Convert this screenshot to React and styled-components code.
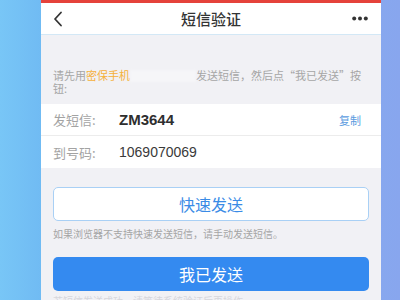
import React from "react";
import styled, { createGlobalStyle } from "styled-components";

const Global = createGlobalStyle`
  html, body { margin: 0; padding: 0; }
  body {
    width: 400px; height: 300px; overflow: hidden;
    font-family: "Noto Sans CJK SC", "Noto Sans", sans-serif;
  }
`;

const Page = styled.div`
  width: 400px;
  height: 300px;
  background: linear-gradient(90deg, #78c6f6 0%, #6fb9f3 12%, #7fb0f1 60%, #88a6ee 100%);
  display: flex;
  align-items: flex-start;
  padding-left: 41px;
  box-sizing: border-box;
  overflow: hidden;
`;

const Card = styled.div`
  width: 340px;
  min-height: 300px;
  background: #f1f1f5;
  display: block;
`;

const RedBar = styled.div`
  height: 3px;
  background: #e5423b;
`;

const NavBar = styled.div`
  height: 31px;
  background: #fff;
  border-bottom: 1px solid #d3e8f6;
  display: grid;
  grid-template-columns: 40px 1fr 40px;
  align-items: center;
`;

const Title = styled.div`
  text-align: center;
  font-size: 15px;
  color: #333;
  font-weight: 500;
`;

const IconSlot = styled.div`
  display: flex;
  align-items: center;
  justify-content: ${(p) => p.$justify};
  padding: ${(p) => p.$pad};
`;

const Intro = styled.div`
  padding: 34px 18px 9px 12px;
  font-size: 11px;
  line-height: 13px;
  color: #a6a6a6;
`;

const IntroLine = styled.div`
  display: flex;
  align-items: center;
  height: 13px;
  white-space: nowrap;
`;

const Orange = styled.span`
  color: #f5b03a;
`;

const Redacted = styled.span`
  display: inline-block;
  width: 66px;
  height: 12px;
  background: #f6f6f8;
  filter: blur(1px);
`;

const Rows = styled.div`
  background: #fff;
`;

const Row = styled.div`
  height: ${(p) => (p.$last ? "32px" : "31px")};
  display: flex;
  align-items: center;
  padding: 0 20px 0 12px;
  border-bottom: ${(p) => (p.$last ? "none" : "1px solid #ececec")};
`;

const Label = styled.span`
  width: 66px;
  font-size: 13px;
  color: #a3a3a3;
`;

const Value = styled.span`
  flex: 1;
  font-family: "Liberation Sans", Arial, sans-serif;
  font-size: ${(p) => (p.$bold ? "15px" : "14px")};
  font-weight: ${(p) => (p.$bold ? 700 : 400)};
  color: ${(p) => (p.$bold ? "#2e2e2e" : "#3a3a3a")};
`;

const Copy = styled.span`
  font-size: 11px;
  color: #5b9be0;
`;

const Actions = styled.div`
  padding: 19px 12px 0 12px;
  display: flex;
  flex-direction: column;
`;

const Button = styled.div`
  flex-shrink: 0;
  height: 34px;
  box-sizing: border-box;
  border-radius: 5px;
  display: flex;
  align-items: center;
  justify-content: center;
  font-size: 16px;
  background: ${(p) => (p.$primary ? "#348af0" : "#fff")};
  color: ${(p) => (p.$primary ? "#fff" : "#3a8be6")};
  border: ${(p) => (p.$primary ? "none" : "1px solid #a9d0f5")};
`;

const Hint = styled.div`
  margin: 6px 0 16px 0;
  font-size: 10px;
  line-height: 14px;
  color: #a5a5a5;
`;

const Faint = styled.div`
  margin-top: 3px;
  font-size: 10px;
  line-height: 14px;
  color: #d6d6dc;
`;

export default function App() {
  return (
    <>
      <Global />
      <Page>
        <Card>
          <RedBar />
          <NavBar>
            <IconSlot $justify="flex-start" $pad="0 0 0 12px">
              <svg width="10" height="16" viewBox="0 0 10 16">
                <path d="M8 1.5 L2 8 L8 14.5" fill="none" stroke="#333" strokeWidth="1.8" strokeLinecap="round" strokeLinejoin="round" />
              </svg>
            </IconSlot>
            <Title>短信验证</Title>
            <IconSlot $justify="flex-end" $pad="0 13px 0 0">
              <svg width="16" height="5" viewBox="0 0 16 5">
                <circle cx="2.2" cy="2.5" r="2" fill="#333" />
                <circle cx="8" cy="2.5" r="2" fill="#333" />
                <circle cx="13.8" cy="2.5" r="2" fill="#333" />
              </svg>
            </IconSlot>
          </NavBar>
          <Intro>
            <IntroLine>
              <span>请先用</span>
              <Orange>密保手机</Orange>
              <Redacted />
              <span>发送短信，然后点“我已发送”按</span>
            </IntroLine>
            <IntroLine>
              <span>钮:</span>
            </IntroLine>
          </Intro>
          <Rows>
            <Row>
              <Label>发短信:</Label>
              <Value $bold>ZM3644</Value>
              <Copy>复制</Copy>
            </Row>
            <Row $last>
              <Label>到号码:</Label>
              <Value>1069070069</Value>
            </Row>
          </Rows>
          <Actions>
            <Button>快速发送</Button>
            <Hint>如果浏览器不支持快速发送短信，请手动发送短信。</Hint>
            <Button $primary>我已发送</Button>
            <Faint>若短信发送成功，请等待系统验证后再操作。</Faint>
          </Actions>
        </Card>
      </Page>
    </>
  );
}
